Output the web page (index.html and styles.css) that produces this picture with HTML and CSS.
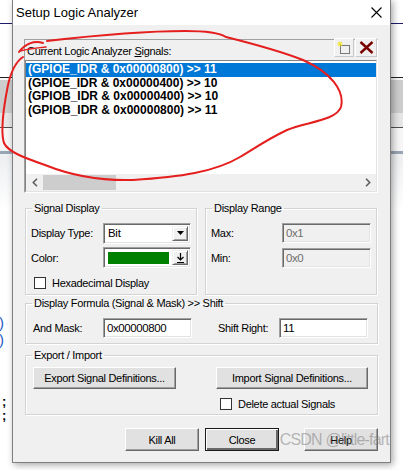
FILE: index.html
```html
<!DOCTYPE html>
<html>
<head>
<meta charset="utf-8">
<title>Setup Logic Analyzer</title>
<link rel="stylesheet" href="styles.css">
</head>
<body>
<div class="screen">
  <div class="side side-left">
    <span class="code-glyph paren">)</span>
    <span class="code-glyph paren">)</span>
    <span class="code-glyph semi semi-first">;</span>
    <span class="code-glyph semi">;</span>
  </div>

  <div class="dialog">
    <div class="titlebar">
      <span class="title">Setup Logic Analyzer</span>
      <svg class="close-x" width="11" height="11" viewBox="0 0 11 11">
        <path d="M0.5 0.5 L10.5 10.5 M10.5 0.5 L0.5 10.5" stroke="#000" stroke-width="1.1" fill="none"/>
      </svg>
    </div>

    <div class="client">
      <div class="signals">
        <div class="sig-head">
          <span class="sig-label">Current Logic Analyzer <u>S</u>ignals:</span>
          <div class="tools">
            <button class="tool-btn">
              <svg width="14" height="14" viewBox="0 0 14 14">
                <rect x="3.5" y="4.5" width="9" height="8" fill="none" stroke="#000" stroke-dasharray="1 1"/>
                <path d="M3 0.5 V5.5 M0.5 3 H5.5 M1.2 1.2 L4.8 4.8 M4.8 1.2 L1.2 4.8" stroke="#f2e21c" stroke-width="1"/>
              </svg>
            </button>
            <button class="tool-btn tool-del">
              <svg width="15" height="13" viewBox="0 0 15 13">
                <path d="M1.5 1 L13.5 12 M13.5 1 L1.5 12" stroke="#7a0000" stroke-width="2.4" fill="none"/>
              </svg>
            </button>
          </div>
        </div>
        <div class="listbox">
          <div class="items">
            <div class="item selected">(GPIOE_IDR &amp; 0x00000800) &gt;&gt; 11</div>
            <div class="item">(GPIOE_IDR &amp; 0x00000400) &gt;&gt; 10</div>
            <div class="item">(GPIOB_IDR &amp; 0x00000400) &gt;&gt; 10</div>
            <div class="item">(GPIOB_IDR &amp; 0x00000800) &gt;&gt; 11</div>
          </div>
          <div class="hscroll">
            <span class="sb-arrow">
              <svg width="6" height="9" viewBox="0 0 6 9"><path d="M5 0.8 L1.3 4.5 L5 8.2" stroke="#606060" stroke-width="1.6" fill="none"/></svg>
            </span>
            <span class="sb-thumb"></span>
            <span class="sb-track"></span>
            <span class="sb-arrow">
              <svg width="6" height="9" viewBox="0 0 6 9"><path d="M1 0.8 L4.7 4.5 L1 8.2" stroke="#606060" stroke-width="1.6" fill="none"/></svg>
            </span>
          </div>
        </div>
      </div>

      <div class="group-row">
        <fieldset class="group">
          <legend>Signal Display</legend>
          <div class="field-row">
            <span class="lbl lbl-wide">Display Type:</span>
            <div class="combo">
              <span class="combo-text">Bit</span>
              <span class="combo-btn">
                <svg width="7" height="4" viewBox="0 0 7 4"><path d="M0 0 H7 L3.5 4 Z" fill="#000"/></svg>
              </span>
            </div>
          </div>
          <div class="field-row row-color">
            <span class="lbl lbl-wide">Color:</span>
            <div class="combo">
              <span class="swatch"></span>
              <span class="combo-btn">
                <svg width="7" height="10" viewBox="0 0 7 10"><path d="M3.5 0 V6 M0.5 4 L3.5 7 L6.5 4 M0 9.5 H7" stroke="#000" stroke-width="1.2" fill="none"/></svg>
              </span>
            </div>
          </div>
          <div class="check-row">
            <span class="checkbox"></span>
            <span>Hexadecimal Display</span>
          </div>
        </fieldset>

        <fieldset class="group">
          <legend>Display Range</legend>
          <div class="field-row">
            <span class="lbl lbl-range">Max:</span>
            <span class="input disabled range-input">0x1</span>
          </div>
          <div class="field-row row-color">
            <span class="lbl lbl-range">Min:</span>
            <span class="input disabled range-input">0x0</span>
          </div>
        </fieldset>
      </div>

      <fieldset class="group formula">
        <legend>Display Formula (Signal &amp; Mask) &gt;&gt; Shift</legend>
        <div class="formula-row">
          <span class="lbl lbl-mask">And Mask:</span>
          <span class="input mask-input">0x00000800</span>
          <span class="lbl lbl-shift">Shift Right:</span>
          <span class="input mask-input">11</span>
        </div>
      </fieldset>

      <fieldset class="group porting">
        <legend>Export / Import</legend>
        <div class="port-buttons">
          <button class="btn btn-export">Export Signal Definitions...</button>
          <button class="btn btn-import">Import Signal Definitions...</button>
        </div>
        <div class="check-row delete-row">
          <span class="checkbox"></span>
          <span>Delete actual Signals</span>
        </div>
      </fieldset>

      <div class="actions">
        <button class="btn btn-act">Kill All</button>
        <button class="btn btn-act btn-default">Close</button>
        <button class="btn btn-act btn-help">Help</button>
      </div>
    </div>
  </div>

  <div class="side side-right"></div>

  <div class="watermark">CSDN @little-fart</div>

  <svg class="ink" width="403" height="470" viewBox="0 0 403 470">
    <path d="M43 43 C34 40 25 44 19 52" stroke="#e51e1e" stroke-width="2" fill="none" stroke-linecap="round"/>
    <path d="M20 51 C28 49 36 48 46 47" stroke="#e51e1e" stroke-width="1.6" fill="none" stroke-linecap="round"/>
    <path d="M47 41 C90 36 140 31 185 31 C210 31 220 33 226 37 C250 43 280 51 303 60 C330 72 345 90 341 107 C336 121 305 122 287 130 C266 140 252 150 240 157 C215 172 180 177 133 180 C100 181 70 175 45 165 C25 158 8 152 4 143 C0 130 5 100 8 85 C11 72 15 62 23 57" stroke="#e51e1e" stroke-width="2" fill="none" stroke-linecap="round"/>
  </svg>
</div>
</body>
</html>
```

FILE: styles.css
```css
* { box-sizing: border-box; }

body {
  margin: 0;
  font-family: "Liberation Sans", Arial, sans-serif;
  font-size: 11px;
  color: #000;
}

.screen {
  position: relative;
  width: 403px;
  height: 470px;
  overflow: hidden;
  display: flex;
  align-items: flex-start;
  background: linear-gradient(to bottom,
    #ffffff 0 23px,
    #1d1d6b 23px 24px,
    #ffffff 24px 77px,
    #202020 77px 78px,
    #f8f8f8 78px 80px,
    #cdcdcd 80px 113px,
    #e6e6e6 113px 127px,
    #505050 127px 128px,
    #f6f6f6 128px 151px,
    #98a5b4 151px 154px,
    #eef0f2 154px 160px,
    #ffffff 210px);
}

/* strip of the editor behind the window */
.side-left {
  width: 12px;
  flex: none;
  display: flex;
  flex-direction: column;
  padding-top: 314px;
}
.code-glyph {
  font-family: "Liberation Sans", Arial, sans-serif;
  font-size: 15px;
  line-height: 17px;
  margin-left: -1px;
}
.paren { color: #1e5bbf; }
.semi {
  color: #000;
  font-weight: bold;
  font-size: 13px;
  line-height: 12px;
  height: 12px;
  margin-left: 2px;
}
.semi-first { margin-top: 48px; margin-bottom: 2px; }

.side-right { flex: 1; }

/* dialog window */
.dialog {
  width: 379px;
  height: 464px;
  margin-top: -1px;
  flex: none;
  border: 1px solid #7f7f7f;
  background: #f0f0f0;
  box-shadow: 2px 2px 7px rgba(0, 0, 0, 0.35);
  display: flex;
  flex-direction: column;
  position: relative;
  z-index: 1;
}

.titlebar {
  height: 25px;
  flex: none;
  background: #fff;
  display: flex;
  align-items: center;
  justify-content: space-between;
  padding: 0 8px 0 3px;
}
.title {
  font-size: 13px;
  letter-spacing: 0;
}
.close-x { display: block; }

.client {
  flex: 1;
  padding: 14px 12px 0 11px;
  display: flex;
  flex-direction: column;
  letter-spacing: -0.3px;
}

/* signal list */
.signals {
  height: 154px;
  border: 1px solid;
  border-color: #a0a0a0 #ffffff #ffffff #a0a0a0;
  display: flex;
  flex-direction: column;
}
.sig-head {
  height: 20px;
  flex: none;
  display: flex;
  align-items: center;
  justify-content: space-between;
  padding-left: 2px;
}
.sig-label { padding-top: 2px; }
.tools {
  display: flex;
  align-self: flex-start;
  margin-top: -2px;
  gap: 1px;
}
.tool-btn {
  width: 20px;
  height: 19px;
  padding: 0;
  border: 1px solid;
  border-color: #ffffff #c8c8c8 #c8c8c8 #ffffff;
  background: #f0f0f0;
  display: flex;
  align-items: center;
  justify-content: center;
}
.tool-del { width: 22px; }

.listbox {
  flex: 1;
  border: 1px solid;
  border-color: #828282 #e3e3e3 #e3e3e3 #828282;
  background: #fff;
  display: flex;
  flex-direction: column;
}
.items {
  flex: 1;
  padding-top: 2px;
}
.item {
  height: 13.5px;
  line-height: 13.5px;
  padding-left: 2px;
  font-size: 12px;
  font-weight: bold;
  letter-spacing: 0;
  white-space: nowrap;
}
.item.selected {
  background: #0078d7;
  color: #fff;
}

.hscroll {
  height: 17px;
  flex: none;
  display: flex;
  background: #f0f0f0;
}
.sb-arrow {
  width: 17px;
  flex: none;
  display: flex;
  align-items: center;
  justify-content: center;
}
.sb-thumb {
  width: 73px;
  background: #cdcdcd;
  margin: 1px 0;
}
.sb-track { flex: 1; }

/* group boxes */
.group {
  margin: 0;
  padding: 0;
  min-width: 0;
  border: 1px solid #d3d3d3;
  box-shadow: 1px 1px 0 #fff inset, 1px 1px 0 #fff;
}
.group legend {
  margin-left: 1px;
  padding: 0 2px;
  line-height: 13px;
  font-size: 11px;
}
.formula legend,
.porting legend { margin-left: -1px; }

.group-row {
  margin: 9px 0 0 1px;
  display: grid;
  grid-template-columns: 172px 172px;
  column-gap: 8px;
}
.group-row .group {
  height: 93px;
  padding: 7px 5px 0 5px;
}

.field-row {
  height: 22px;
  display: flex;
  align-items: center;
}
.row-color {
  height: 21px;
  margin-top: 3px;
}
.lbl-wide { width: 72px; flex: none; }
.lbl-range { width: 71px; flex: none; }

.combo {
  width: 90px;
  height: 21px;
  border: 1px solid;
  border-color: #a0a0a0 #ffffff #ffffff #a0a0a0;
  box-shadow: inset 1px 1px 0 #696969, inset -1px -1px 0 #e3e3e3;
  background: #fff;
  display: flex;
  align-items: stretch;
  padding: 2px;
}
.combo-text {
  flex: 1;
  padding-left: 2px;
  line-height: 15px;
  font-size: 11.5px;
}
.swatch {
  flex: 1;
  background: #008000;
  margin: 2px 3px 1px 2px;
}
.combo-btn {
  width: 16px;
  flex: none;
  background: #f0f0f0;
  border: 1px solid;
  border-color: #f0f0f0 #696969 #696969 #f0f0f0;
  box-shadow: inset 1px 1px 0 #fff, inset -1px -1px 0 #a0a0a0;
  display: flex;
  align-items: center;
  justify-content: center;
}

.check-row {
  display: flex;
  align-items: center;
  gap: 6px;
  height: 16px;
  margin-top: 7px;
  padding-left: 3px;
}
.checkbox {
  width: 12px;
  height: 12px;
  flex: none;
  border: 1px solid #333;
  background: #fff;
}

.input {
  height: 20px;
  border: 1px solid;
  border-color: #a0a0a0 #ffffff #ffffff #a0a0a0;
  box-shadow: inset 1px 1px 0 #696969, inset -1px -1px 0 #e3e3e3;
  background: #fff;
  padding: 2px 0 0 3px;
  line-height: 15px;
  font-size: 11.5px;
  letter-spacing: -0.4px;
}
.input.disabled {
  background: #f0f0f0;
  color: #6d6d6d;
}
.range-input { width: 89px; }

/* formula */
.formula {
  margin: 2px 0 0 1px;
  height: 47px;
  padding: 8px 7px 0 7px;
}
.formula-row {
  display: flex;
  align-items: center;
  height: 20px;
}
.lbl-mask { width: 70px; flex: none; }
.mask-input { width: 89px; flex: none; }
.lbl-shift { width: 61px; margin-left: 26px; flex: none; }

/* export / import */
.porting {
  margin: 5px 0 0 1px;
  height: 66px;
  padding: 5px 7px 0 7px;
}
.port-buttons {
  display: flex;
  gap: 40px;
}
.btn {
  height: 22px;
  padding: 0;
  font-family: "Liberation Sans", Arial, sans-serif;
  font-size: 11px;
  letter-spacing: -0.3px;
  color: #000;
  background: #e1e1e1;
  border: 1px solid;
  border-color: #ffffff #696969 #696969 #ffffff;
  box-shadow: inset -1px -1px 0 #a0a0a0;
}
.btn-export { width: 143px; }
.btn-import { width: 152px; }
.delete-row {
  margin-top: 7px;
  padding-left: 187px;
}

/* dialog buttons */
.actions {
  margin-top: 13px;
  display: flex;
  justify-content: flex-end;
  gap: 6px;
}
.btn-act { width: 74px; height: 23px; }
.btn-default {
  border: 1px solid #1a1a1a;
  box-shadow: inset 1px 1px 0 #fff, inset -2px -2px 0 #696969;
}
.btn-help { margin-left: 19px; }

/* overlays */
.watermark {
  position: absolute;
  right: 14px;
  top: 431px;
  z-index: 2;
  font-size: 16px;
  letter-spacing: -0.8px;
  color: rgba(120, 120, 120, 0.5);
}

.ink {
  position: absolute;
  left: 0;
  top: 0;
  z-index: 3;
  pointer-events: none;
}
```
